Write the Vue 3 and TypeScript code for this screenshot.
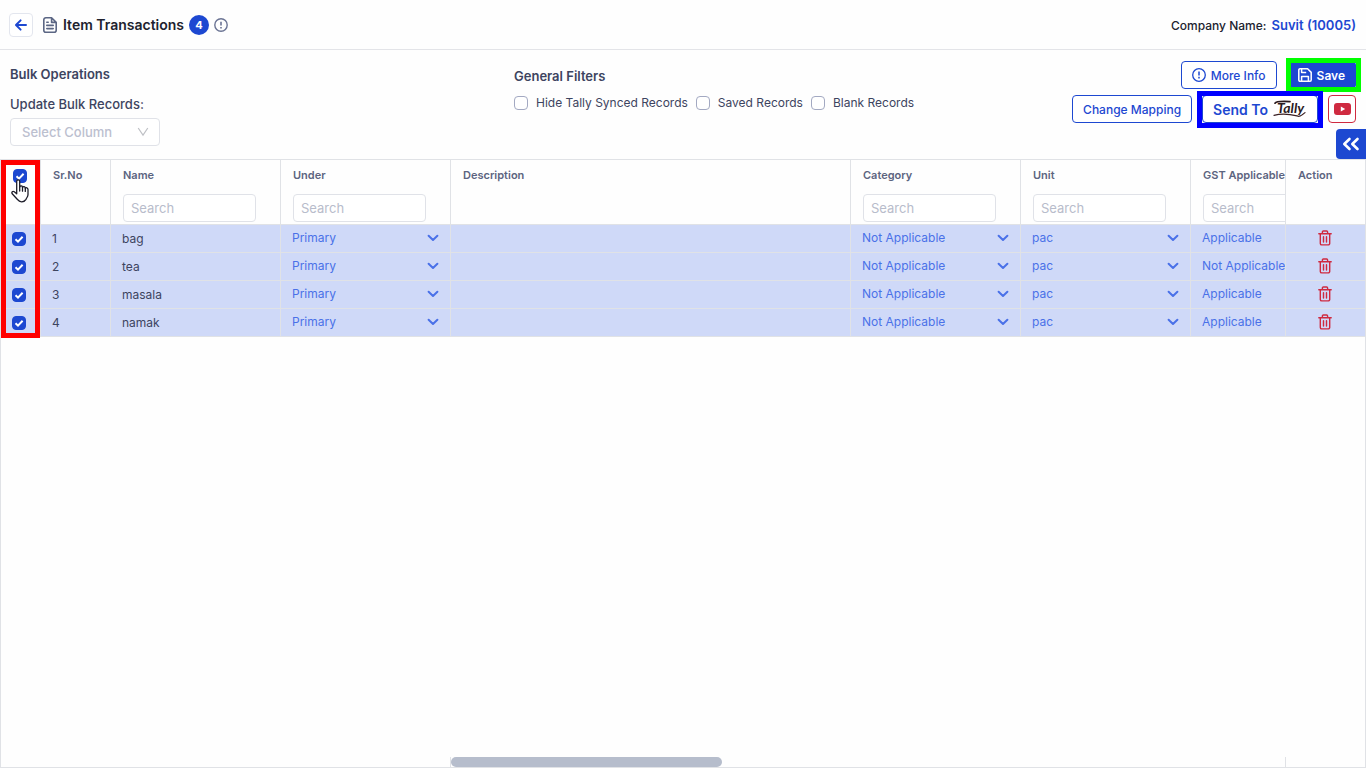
<script setup lang="ts">
import { computed, ref } from 'vue'

interface Item {
  id: number
  name: string
  under: string
  category: string
  unit: string
  gst: string
  selected: boolean
}

interface Column {
  key: string
  label: string
  width?: number
  search?: boolean
}

const columns: Column[] = [
  { key: 'sr', label: 'Sr.No', width: 70 },
  { key: 'name', label: 'Name', width: 170, search: true },
  { key: 'under', label: 'Under', width: 170, search: true },
  { key: 'description', label: 'Description' },
  { key: 'category', label: 'Category', width: 170, search: true },
  { key: 'unit', label: 'Unit', width: 170, search: true },
  { key: 'gst', label: 'GST Applicable', width: 170, search: true },
]

const choices = ['under', 'description', 'category', 'unit', 'gst'] as const

const items = ref<Item[]>([
  { id: 1, name: 'bag', under: 'Primary', category: 'Not Applicable', unit: 'pac', gst: 'Applicable', selected: true },
  { id: 2, name: 'tea', under: 'Primary', category: 'Not Applicable', unit: 'pac', gst: 'Not Applicable', selected: true },
  { id: 3, name: 'masala', under: 'Primary', category: 'Not Applicable', unit: 'pac', gst: 'Applicable', selected: true },
  { id: 4, name: 'namak', under: 'Primary', category: 'Not Applicable', unit: 'pac', gst: 'Applicable', selected: true },
])

const options: Record<string, string[]> = {
  under: ['Primary'],
  category: ['Not Applicable', 'Applicable'],
  unit: ['pac'],
  gst: ['Applicable', 'Not Applicable'],
}

const filters = ref([
  { label: 'Hide Tally Synced Records', on: false },
  { label: 'Saved Records', on: false },
  { label: 'Blank Records', on: false },
])

const allSelected = computed({
  get: () => items.value.length > 0 && items.value.every((i) => i.selected),
  set: (v: boolean) => items.value.forEach((i) => (i.selected = v)),
})

function remove(id: number) {
  items.value = items.value.filter((i) => i.id !== id)
}
</script>

<template>
  <div class="page">
    <header class="topbar">
      <button class="back" aria-label="Back">
        <svg width="14" height="14" viewBox="0 0 14 14" fill="none" stroke="#1d48d1" stroke-width="2" stroke-linecap="round" stroke-linejoin="round"><path d="M12 7H2.2M6.6 2.4L2 7l4.600 4.600" /></svg>
      </button>
      <svg class="doc" width="14" height="16" viewBox="0 0 14 16" fill="none" stroke="#5b6684" stroke-width="1.600" stroke-linejoin="round" stroke-linecap="round"><path d="M8.600.8H2.800a2 2 0 0 0-2 2v10.400a2 2 0 0 0 2 2h8.400a2 2 0 0 0 2-2V5.400zM8.600.8v4.600h4.600M3.800 5.200h1.400M3.800 8.400h6.400M3.800 11.600h6.400" /></svg>
      <h1>Item Transactions</h1>
      <span class="count">{{ items.length }}</span>
      <svg width="14" height="14" viewBox="0 0 14 14" fill="none" stroke="#6b7494" stroke-width="1.400"><circle cx="7" cy="7" r="6.200" /><path d="M7 3.800v3.800M7 9v1.400" stroke-width="1.600" /></svg>
      <p class="company">Company Name: <a href="#">Suvit (10005)</a></p>
    </header>

    <section class="tools">
      <div class="bulk">
        <h2>Bulk Operations</h2>
        <label for="bulk-column">Update Bulk Records:</label>
        <div class="pick">
          <select id="bulk-column"><option>Select Column</option></select>
          <svg width="12" height="10" viewBox="0 0 12 10" fill="none" stroke="#bfc1c6" stroke-width="1.200"><path d="M1.200 1L6 8.200 10.800 1" /></svg>
        </div>
      </div>

      <div class="filters">
        <h2>General Filters</h2>
        <div class="checks">
          <label v-for="f in filters" :key="f.label"><input v-model="f.on" type="checkbox" />{{ f.label }}</label>
        </div>
      </div>

      <div class="actions">
        <div class="line">
          <button class="btn">
            <svg width="14" height="14" viewBox="0 0 14 14" fill="none" stroke="currentColor" stroke-width="1.300"><circle cx="7" cy="7" r="6.300" /><path d="M7 3.600v3.800M7 8.800v1.600" stroke-width="1.500" /></svg>
            More Info
          </button>
          <div class="marked mark-green">
            <button class="btn solid">
              <svg width="14" height="14" viewBox="0 0 14 14" fill="none" stroke="currentColor" stroke-width="1.500" stroke-linejoin="round"><path d="M.8 2A1.200 1.200 0 0 1 2 .8h7.600l3.600 3.600V12a1.200 1.200 0 0 1-1.200 1.200H2A1.200 1.200 0 0 1 .8 12zM3.600 13V8.600h6.800V13M3.600 1v3.600h4.600" /></svg>
              Save
            </button>
          </div>
        </div>
        <div class="line">
          <button class="btn">Change Mapping</button>
          <div class="marked mark-blue">
            <button class="btn send">
              Send To
              <svg width="34" height="20" viewBox="0 0 34 20" role="img" aria-label="Tally">
                <path d="M2 4.200C3 2.600 8 2 17 2.600" fill="none" stroke="#2b1a1e" stroke-width="1.700" stroke-linecap="round" />
                <text x="4" y="14" font-family="Lato, sans-serif" font-size="14" font-style="italic" font-weight="700" fill="#2b1a1e">Tally</text>
                <path d="M1 16.400C8 14.400 16 15 24 16.800M24 16.800C26 18.400 28 17 32 13.600" fill="none" stroke="#3b2023" stroke-width="1.200" stroke-linecap="round" />
              </svg>
            </button>
          </div>
          <button class="btn video" aria-label="Watch video">
            <svg width="17" height="12" viewBox="0 0 17 12"><rect width="17" height="12" rx="3" fill="#cf2a40" /><path d="M6.800 3.500v5L11.200 6z" fill="#fff" /></svg>
          </button>
        </div>
      </div>
      <button class="collapse" aria-label="Open side panel">
        <svg width="18" height="14" viewBox="0 0 18 14" fill="none" stroke="#fff" stroke-width="2.600" stroke-linecap="round" stroke-linejoin="round"><path d="M7.500 2L2.300 7l5.200 5M15.500 2l-5.200 5 5.200 5" /></svg>
      </button>
    </section>

    <main class="grid">
      <div class="scroller">
        <table>
          <colgroup>
            <col class="c-tick" />
            <col v-for="c in columns" :key="c.key" :style="c.width ? { width: c.width + 'px' } : undefined" />
            <col class="c-action" />
          </colgroup>
          <thead>
            <tr>
              <th class="tick"><input v-model="allSelected" type="checkbox" aria-label="Select all" /></th>
              <th v-for="c in columns" :key="c.key">
                <span>{{ c.label }}</span>
                <input v-if="c.search" class="search" type="text" placeholder="Search" :aria-label="'Search ' + c.label" />
              </th>
              <th class="action"><span>Action</span></th>
            </tr>
          </thead>
          <tbody>
            <tr v-for="item in items" :key="item.id" :class="{ on: item.selected }">
              <td class="tick"><input v-model="item.selected" type="checkbox" :aria-label="'Select ' + item.name" /></td>
              <td>{{ item.id }}</td>
              <td>{{ item.name }}</td>
              <td v-for="key in choices" :key="key" class="choice">
                <div v-if="key !== 'description'" class="drop">
                  <select v-model="item[key]" :aria-label="key + ' of ' + item.name">
                    <option v-for="o in options[key]" :key="o">{{ o }}</option>
                  </select>
                  <svg width="12" height="8" viewBox="0 0 12 8" fill="none" stroke="#4a71e8" stroke-width="2" stroke-linecap="round" stroke-linejoin="round"><path d="M1.600 1.800L6 6l4.400-4.200" /></svg>
                </div>
              </td>
              <td class="action">
                <button :aria-label="'Delete ' + item.name" @click="remove(item.id)">
                  <svg width="14" height="16" viewBox="0 0 14 16" fill="none" stroke="#cf2a40" stroke-width="1.400" stroke-linejoin="round" stroke-linecap="round"><path d="M.8 3.800h12.400M4.400 3.600V2a1 1 0 0 1 1-1h3.200a1 1 0 0 1 1 1v1.600M2.300 4v9.400a1.500 1.500 0 0 0 1.500 1.500h6.400a1.500 1.500 0 0 0 1.500-1.500V4M5.500 6.800v5.200M8.500 6.800v5.200" /></svg>
                </button>
              </td>
            </tr>
          </tbody>
        </table>
        <div class="mark-red"></div>
        <svg class="pointer" width="18" height="24" viewBox="0 0 18 24" fill="#fff" stroke="#1c1c28" stroke-width="1.300" stroke-linejoin="round" stroke-linecap="round">
          <path d="M5.700 14V2.300C5.700.3 8.700.3 8.700 2.300V8.200C9.200 6.300 11.500 6.600 11.500 8.400C12.200 7 14.200 7.400 14.300 9.200C15 8.200 17 8.600 17 10.600V15.500C17 18 15.500 18.700 15 20.300C13 23.600 8.500 23.600 6.700 20.700L1.200 14.800C.2 13 1.800 11.800 3.300 12.800L5.700 14.800z" />
          <path d="M8.700 8.200v3.800M11.500 8.600v3.600M14.300 9.400v3" />
        </svg>
      </div>
      <div class="hscroll">
        <div class="pinned"></div>
        <div class="track"><div class="thumb"></div></div>
        <div class="end"></div>
      </div>
    </main>
  </div>
</template>

<style>
body { margin: 0; background: #fefefe; }
</style>

<style scoped>
* { box-sizing: border-box; }
.page { display: flex; flex-direction: column; min-height: 100vh; overflow: hidden; font-family: Inter, "Liberation Sans", sans-serif; font-size: 12px; color: #3d4460; }
button, input, select { font: inherit; color: inherit; margin: 0; }
button { cursor: pointer; }
svg { display: block; flex: none; }
h1, h2, p { margin: 0; }

.topbar { display: flex; align-items: center; height: 50px; padding: 0 10px 0 9px; border-bottom: 1px solid #e3e4e8; }
.back { display: grid; place-items: center; width: 24px; height: 24px; padding: 0; background: #fff; border: 1px solid #e3e6ee; border-radius: 4px; }
.doc { margin: 0 6px 0 10px; }
h1 { font-size: 14px; font-weight: 600; line-height: 20px; color: #20222e; }
.count { display: grid; place-items: center; width: 20px; height: 20px; margin: 0 5px; border-radius: 50%; background: #1d48d1; color: #fff; font-weight: 700; font-size: 11px; }
.company { margin-left: auto; font-weight: 500; color: #20222e; }
.company a { margin-left: 2px; font-size: 13px; font-weight: 600; color: #1d48d1; text-decoration: none; }

.tools { position: relative; display: flex; height: 109px; padding: 0 10px; }
.bulk { width: 504px; padding-top: 14px; }
h2 { font-size: 13px; line-height: 20px; font-weight: 600; color: #3d4460; }
.bulk label { display: block; margin-top: 9px; line-height: 22px; font-size: 13px; font-weight: 500; }
.pick { position: relative; width: 150px; margin-top: 3px; }
.pick select { width: 100%; height: 28px; padding: 0 11px; appearance: none; border: 1px solid #e0e2e8; border-radius: 4px; background: #fff; color: #bcc0cf; font-size: 13px; font-weight: 500; }
.pick svg { position: absolute; right: 11px; top: 9px; pointer-events: none; }
.filters { padding-top: 16px; }
.checks { display: flex; gap: 8px; margin-top: 7px; }
.checks label { display: flex; align-items: center; gap: 8px; line-height: 20px; }

input[type="checkbox"] { appearance: none; flex: none; width: 14px; height: 14px; border: 1px solid #a3a9c2; border-radius: 4px; background: #fff; }
input[type="checkbox"]:checked { border-color: #1d48d1; background: #1d48d1 url("data:image/svg+xml,%3Csvg xmlns='http://www.w3.org/2000/svg' viewBox='0 0 12 12' fill='none' stroke='white' stroke-width='2'%3E%3Cpath d='M2.500 6.200L5 8.600 9.600 3.800'/%3E%3C/svg%3E") center / 12px 12px no-repeat; }

.actions { display: flex; flex-direction: column; gap: 6px; margin-left: auto; padding-top: 11px; }
.line { display: flex; justify-content: flex-end; gap: 10px; }
.btn { display: flex; align-items: center; justify-content: center; gap: 5px; height: 28px; padding: 0 10px; border: 1px solid #1d48d1; border-radius: 4px; background: #fff; color: #1d48d1; font-weight: 500; white-space: nowrap; }
.btn.solid { background: #1d48d1; color: #fff; font-weight: 600; }
.btn.send { font-size: 14px; font-weight: 600; }
.btn.video { width: 28px; padding: 0; border-color: #cf2a40; }
.marked { position: relative; }
.marked::after { content: ""; position: absolute; pointer-events: none; }
.mark-green::after { inset: -3px -5px -3px -1px; border: 5px solid #00ff00; }
.mark-blue::after { inset: -4px -5px -5px; border: 5px solid #0000ff; }
.collapse { position: absolute; right: 0; bottom: 0; display: grid; place-items: center; width: 30px; height: 30px; padding: 0; border: 0; border-radius: 4px 0 0 4px; background: #1d48d1; }

.grid { display: flex; flex: 1; flex-direction: column; border: 1px solid #e0e2e6; }
.scroller { position: relative; flex: 1; overflow: hidden; }
table { width: 100%; min-width: 1440px; table-layout: fixed; border-collapse: separate; border-spacing: 0; }
.c-tick { width: 40px; }
.c-action { width: 80px; }
th, td { border-right: 1px solid #e0e2e6; border-bottom: 1px solid #e0e2e6; text-align: left; white-space: nowrap; }
th { height: 65px; padding: 5px 12px 0; vertical-align: top; font-size: 11px; line-height: 20px; font-weight: 600; color: #5c6480; }
th span { display: block; }
.search { display: block; width: 133px; height: 28px; margin-top: 9px; padding: 0 7px; border: 1px solid #e0e2e8; border-radius: 4px; background: #fff; font-size: 13px; font-weight: 400; }
.search::placeholder { color: #b8bccb; opacity: 1; }
td { height: 28px; padding: 0 11px; line-height: 20px; }
tr.on td { background: #cfd9f8; }
.tick, td.tick { padding: 0 0 0 11px; }
th.tick { padding: 9px 0 0 12px; }
.tick input { display: block; }
.choice { padding-bottom: 2px; color: #4a71e8; }
.drop { display: flex; align-items: center; }
.drop select { flex: 1; min-width: 0; height: 24px; padding: 0; appearance: none; border: 0; background: transparent; }
.action { position: sticky; right: 0; border-left: 1px solid #e0e2e6; border-right: 0; background: #fefefe; }
td.action { padding: 0 1px 2px 0; }
td.action button { display: block; margin: 0 auto; padding: 0; border: 0; background: none; }
.mark-red { position: absolute; left: 0; top: 0; width: 39px; height: 178px; border: 5px solid #ff0000; pointer-events: none; }
.pointer { position: absolute; left: 10px; top: 19px; pointer-events: none; }

.hscroll { display: flex; height: 10px; }
.pinned { width: 450px; border-right: 1px solid #e0e2e6; }
.track { flex: 1; }
.thumb { width: 32.5%; height: 10px; border-radius: 5px; background: #b6bdcc; }
.end { width: 80px; border-left: 1px solid #e0e2e6; }
</style>
